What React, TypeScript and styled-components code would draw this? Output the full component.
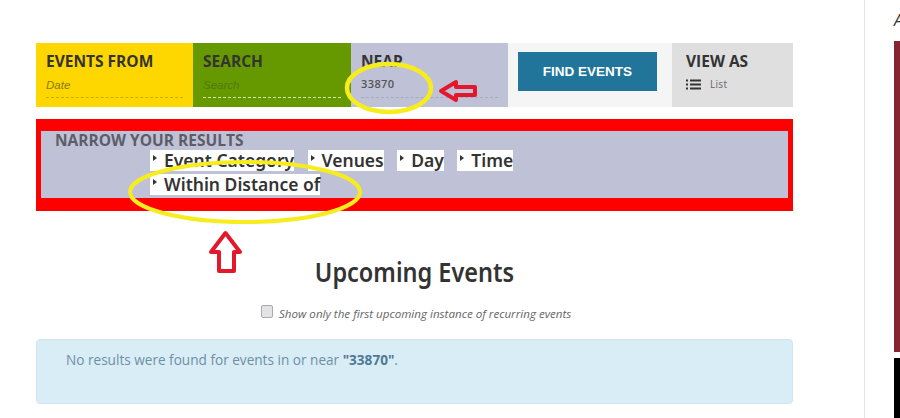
import React from "react";
import styled, { createGlobalStyle } from "styled-components";

const Global = createGlobalStyle`
  html, body { margin: 0; padding: 0; background: #fff; overflow: hidden; }
  body { font-family: "Open Sans", sans-serif; color: #333; }
`;

const Page = styled.div`
  position: relative;
  width: 900px;
  height: 418px;
  overflow: hidden;
  display: flex;
`;

const Main = styled.main`
  flex: none;
  width: 757px;
  padding: 43px 0 0 36px;
`;

const Rule = styled.div`
  flex: none;
  width: 1px;
  height: 418px;
  margin-left: 71px;
  background: #e4e4e4;
`;

const Side = styled.aside`
  flex: none;
  width: 30px;
  margin-left: 29px;
  display: flex;
  flex-direction: column;
`;

const SideTitle = styled.div`
  height: 41px;
  font-size: 16px;
  font-style: italic;
  line-height: 41px;
  color: #333;
`;

const SideBlock = styled.div<{ $bg: string; $h: number }>`
  height: ${(p) => p.$h}px;
  flex: none;
  background: ${(p) => p.$bg};
  margin-bottom: 6px;
`;

const Bar = styled.div`
  display: flex;
  height: 64px;
`;

const Cell = styled.div<{ $bg: string; $w: number; $pad?: number }>`
  width: ${(p) => p.$w}px;
  background: ${(p) => p.$bg};
  padding: 8px 10px 0 ${(p) => p.$pad ?? 10}px;
  box-sizing: border-box;
`;

const Label = styled.div`
  font-size: 15.5px;
  font-weight: 700;
  line-height: 20px;
  color: #333;
`;

const Field = styled.div<{ $line: string; $color: string }>`
  margin-top: 4px;
  height: 22px;
  line-height: 20px;
  font-size: 11.5px;
  font-family: "Liberation Sans", sans-serif;
  font-style: italic;
  color: ${(p) => p.$color};
  border-bottom: 1px dashed ${(p) => p.$line};
`;

const NearField = styled(Field)`
  font-family: "Open Sans", sans-serif;
  font-style: normal;
  font-weight: 600;
  font-size: 11px;
  line-height: 18px;
  letter-spacing: 0.4px;
`;

const ButtonCell = styled.div`
  width: 164px;
  background: #f5f5f5;
  padding: 9px 10px;
  box-sizing: border-box;
`;

const FindButton = styled.button`
  display: block;
  width: 139px;
  height: 39px;
  border: 0;
  padding: 0;
  background: #21759b;
  color: #fff;
  font-family: "Liberation Sans", sans-serif;
  font-size: 13.5px;
  font-weight: 700;
`;

const ViewRow = styled.div`
  display: flex;
  align-items: center;
  gap: 9px;
  margin-top: 3px;
  height: 20px;
  font-size: 10px;
  letter-spacing: 0.3px;
  color: #666;
`;

const Narrow = styled.div`
  margin-top: 12px;
  height: 92px;
  box-sizing: border-box;
  border: solid #ff0000;
  border-width: 12px 5px 13px;
  background: #bfc1d6;
  padding: 0 0 0 14px;
`;

const NarrowTitle = styled.div`
  font-size: 15.5px;
  font-weight: 700;
  line-height: 18px;
  color: #5c5d68;
`;

const Filters = styled.div`
  margin: 1px 0 0 95px;
  display: flex;
  flex-wrap: wrap;
  width: 420px;
  column-gap: 13.5px;
  row-gap: 3px;
`;

const Filter = styled.span`
  display: inline-flex;
  height: 21px;
  background: #fff;
  font-family: "Noto Sans", sans-serif;
  font-size: 17.5px;
  font-weight: 600;
  line-height: 21px;
  color: #333;
  white-space: nowrap;
`;

const Caret = styled.i`
  width: 0;
  height: 0;
  margin: 5px 7px 0 3px;
  border-style: solid;
  border-width: 3px 0 3px 4px;
  border-color: transparent transparent transparent #333;
`;

const Heading = styled.h2`
  margin: 43px 0 0;
  text-align: center;
  width: 757px;
  font-family: "Noto Sans", sans-serif;
  font-size: 27px;
  font-weight: 600;
  line-height: 36px;
  color: #333;
  transform: scaleX(0.87);
`;

const CheckRow = styled.label`
  display: flex;
  align-items: center;
  gap: 6px;
  margin: 13px 0 0 225px;
  height: 20px;
  font-size: 11.6px;
  font-style: italic;
  color: #666;
`;

const Check = styled.span`
  width: 10px;
  height: 11px;
  border: 1px solid #aaa;
  border-radius: 2px;
  background: #e3e3e6;
  margin-top: -4px;
`;

const Alert = styled.div`
  margin-top: 16px;
  height: 65px;
  box-sizing: border-box;
  padding: 10px 29px;
  background: #d9edf7;
  border: 1px solid #cfe6f1;
  border-radius: 4px;
  font-size: 13.6px;
  line-height: 20px;
  color: #6f8fa3;

  strong {
    color: #4f7a94;
  }
`;

const Overlay = styled.svg`
  position: absolute;
  inset: 0;
  pointer-events: none;
`;

const ListIcon = () => (
  <svg width="15" height="11" viewBox="0 0 15 11" fill="#333">
    <rect x="0" y="0.5" width="2" height="2" />
    <rect x="0" y="4.5" width="2" height="2" />
    <rect x="0" y="8.5" width="2" height="2" />
    <rect x="4" y="0.5" width="11" height="2" />
    <rect x="4" y="4.5" width="11" height="2" />
    <rect x="4" y="8.5" width="11" height="2" />
  </svg>
);

const filters = ["Event Category", "Venues", "Day", "Time", "Within Distance of"];

export default function App() {
  return (
    <>
      <Global />
      <Page>
        <Main>
          <Bar>
            <Cell $bg="#ffd700" $w={157}>
              <Label>EVENTS FROM</Label>
              <Field $line="#c9ab00" $color="#8a7a10">Date</Field>
            </Cell>
            <Cell $bg="#669900" $w={158}>
              <Label>SEARCH</Label>
              <Field $line="#d5e3b5" $color="#4d7a0a">Search</Field>
            </Cell>
            <Cell $bg="#bfc1d6" $w={157}>
              <Label>NEAR</Label>
              <NearField $line="#a8aac0" $color="#555">33870</NearField>
            </Cell>
            <ButtonCell>
              <FindButton>FIND EVENTS</FindButton>
            </ButtonCell>
            <Cell $bg="#dfdfdf" $w={121} $pad={14}>
              <Label>VIEW AS</Label>
              <ViewRow>
                <ListIcon />
                List
              </ViewRow>
            </Cell>
          </Bar>
          <Narrow>
            <NarrowTitle>NARROW YOUR RESULTS</NarrowTitle>
            <Filters>
              {filters.map((f) => (
                <Filter key={f}>
                  <Caret />
                  {f}
                </Filter>
              ))}
            </Filters>
          </Narrow>
          <Heading>Upcoming Events</Heading>
          <CheckRow>
            <Check />
            Show only the first upcoming instance of recurring events
          </CheckRow>
          <Alert>
            No results were found for events in or near <strong>"33870"</strong>.
          </Alert>
        </Main>
        <Rule />
        <Side>
          <SideTitle>A</SideTitle>
          <SideBlock $bg="#862633" $h={311} />
          <SideBlock $bg="#000" $h={60} />
        </Side>
        <Overlay width="900" height="418" viewBox="0 0 900 418">
          <ellipse cx="389" cy="88" rx="42" ry="24" fill="none" stroke="#f7ec1e" strokeWidth="4.5" />
          <ellipse cx="245" cy="192" rx="115" ry="30" fill="none" stroke="#f7ec1e" strokeWidth="4" />
          <path d="M441 91 L456 82 L456 87 L475 87 L475 95 L456 95 L456 100 Z" fill="none" stroke="#e3182d" strokeWidth="4" strokeLinejoin="round" />
          <path d="M225.5 233 L240 252 L234 252 L234 271 L219 271 L219 252 L211 252 Z" fill="none" stroke="#e3182d" strokeWidth="4" strokeLinejoin="round" />
        </Overlay>
      </Page>
    </>
  );
}
